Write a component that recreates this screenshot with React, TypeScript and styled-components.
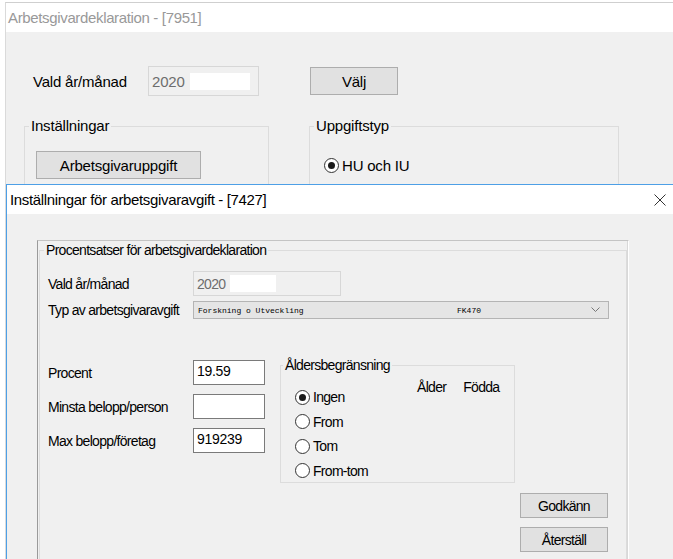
import React from "react";
import styled, { createGlobalStyle } from "styled-components";

const FONT = `"Liberation Sans", Arial, sans-serif`;

const GlobalStyle = createGlobalStyle`
  html, body {
    margin: 0;
    padding: 0;
    background: #fff;
    font-family: ${FONT};
  }
  * {
    box-sizing: border-box;
  }
`;

const Screen = styled.div`
  position: relative;
  width: 673px;
  height: 559px;
  overflow: hidden;
  background: #fff;
`;

const BackWindow = styled.div`
  margin: 2px 0 0 5px;
  height: 557px;
  border-top: 1px solid #cfcfcf;
  border-left: 1px solid #dadada;
  display: flex;
  flex-direction: column;
`;

const TitleBar = styled.div<{ inactive?: boolean }>`
  height: 29px;
  flex: none;
  background: #fff;
  display: flex;
  align-items: center;
  padding-left: 2px;
  font-size: 15px;
  letter-spacing: -0.35px;
  color: ${(p) => (p.inactive ? "#999" : "#000")};
`;

const BackBody = styled.div`
  flex: 1;
  background: #f0f0f0;
  padding: 34px 0 0 27px;
  font-size: 15px;
  letter-spacing: -0.2px;
  color: #000;
`;

const Row = styled.div`
  display: flex;
  align-items: center;
`;

const TopLabel = styled.div`
  width: 115px;
`;

const ReadOnlyBox = styled.div<{ w: number; h: number }>`
  width: ${(p) => p.w}px;
  height: ${(p) => p.h}px;
  border: 1px solid #d7d7d7;
  background: #f0f0f0;
  display: flex;
  align-items: center;
  padding-left: 3px;
  color: #6d6d6d;
`;

const WhiteBlock = styled.span<{ w: number }>`
  display: inline-block;
  width: ${(p) => p.w}px;
  height: 17px;
  margin-left: 5px;
  background: #fff;
`;

const Button = styled.button<{ w: number; h: number }>`
  width: ${(p) => p.w}px;
  height: ${(p) => p.h}px;
  background: #e1e1e1;
  border: 1px solid #adadad;
  font: inherit;
  letter-spacing: inherit;
  color: #000;
  padding: 0;
`;

const GroupRow = styled.div`
  display: flex;
  gap: 40px;
  margin-top: 22px;
  margin-left: -9px;
`;

const Group = styled.fieldset<{ w: number; h: number }>`
  width: ${(p) => p.w}px;
  height: ${(p) => p.h}px;
  margin: 0;
  padding: 0;
  border: 1px solid #dcdcdc;
  min-width: 0;
`;

const Legend = styled.legend<{ offset?: number }>`
  margin-left: ${(p) => p.offset ?? 4}px;
  padding: 0 2px;
  line-height: 16px;
  white-space: nowrap;
`;

const GroupInner = styled.div<{ pt: number; pl: number }>`
  padding: ${(p) => p.pt}px 0 0 ${(p) => p.pl}px;
`;

const RadioRow = styled.label`
  display: flex;
  align-items: center;
  gap: 3px;
  height: 24.5px;
  white-space: nowrap;
`;

const RadioDot = styled.span<{ checked?: boolean }>`
  flex: none;
  width: 15px;
  height: 15px;
  border-radius: 50%;
  border: 1px solid #333;
  background: #fff;
  display: flex;
  align-items: center;
  justify-content: center;
  &::after {
    content: "";
    width: 7px;
    height: 7px;
    border-radius: 50%;
    background: ${(p) => (p.checked ? "#1a1a1a" : "transparent")};
  }
`;

const Dialog = styled.div`
  position: absolute;
  left: 6px;
  top: 184px;
  right: -2px;
  bottom: -2px;
  border: 1px solid #4d9fe6;
  display: flex;
  flex-direction: column;
  background: #f0f0f0;
`;

const DialogTitle = styled(TitleBar)`
  justify-content: space-between;
  padding: 0 8px 0 3px;
`;

const CloseIcon = () => (
  <svg width="12" height="12" viewBox="0 0 12 12">
    <path d="M0.5 0.5 L11.5 11.5 M11.5 0.5 L0.5 11.5" stroke="#333" strokeWidth="1" fill="none" />
  </svg>
);

const DialogBody = styled.div`
  flex: 1;
  padding: 26px 0 0 30px;
  font-size: 14px;
  letter-spacing: -0.7px;
`;

const Panel = styled.div`
  width: 592px;
  height: 330px;
  border-top: 1px solid #c4c4c4;
  border-left: 1px solid #9a9a9a;
  border-right: 1px solid #fff;
  box-shadow: inset -1px 0 0 #d8d8d8;
  padding: 1px 3px 0 1px;
`;

const FormGrid = styled.div`
  display: grid;
  grid-template-columns: 145px auto;
  align-items: center;
  row-gap: 5px;
  padding: 13px 0 0 8px;
  white-space: nowrap;
`;

const Select = styled.div`
  width: 416px;
  height: 18px;
  background: #e5e5e5;
  border: 1px solid #b4b4b4;
  display: flex;
  align-items: center;
  padding: 0 8px 0 4px;
  font-family: "Liberation Mono", monospace;
  font-size: 8px;
  letter-spacing: 0;
  color: #000;
`;

const SelectName = styled.span`
  width: 259px;
`;

const Chevron = () => (
  <svg width="9" height="6" viewBox="0 0 9 6" style={{ marginLeft: "auto" }}>
    <polyline points="0.5,0.5 4.5,4.5 8.5,0.5" stroke="#777" strokeWidth="1" fill="none" />
  </svg>
);

const LowerArea = styled.div`
  display: flex;
  align-items: flex-start;
  margin-top: 41px;
  padding-left: 8px;
`;

const Fields = styled.div`
  display: grid;
  grid-template-columns: 145px 72px;
  grid-auto-rows: 25px;
  row-gap: 9px;
  align-items: center;
  white-space: nowrap;
`;

const TextBox = styled.div`
  height: 25px;
  background: #fff;
  border: 1px solid #7a7a7a;
  padding: 2px 0 0 3px;
  letter-spacing: -0.3px;
`;

const AgeGroup = styled(Group)`
  margin: -3px 0 0 15px;
`;

const AgeHeads = styled.div`
  display: flex;
  gap: 17px;
  margin: 6px 0 -10px 136px;
`;

const ButtonColumn = styled.div`
  display: flex;
  flex-direction: column;
  gap: 9px;
  margin: 10px 0 0 480px;
`;

export default function App() {
  return (
    <Screen>
      <GlobalStyle />
      <BackWindow>
        <TitleBar inactive>Arbetsgivardeklaration - [7951]</TitleBar>
        <BackBody>
          <Row>
            <TopLabel>Vald år/månad</TopLabel>
            <ReadOnlyBox w={111} h={30}>
              2020
              <WhiteBlock w={60} />
            </ReadOnlyBox>
            <Button w={88} h={28} style={{ marginLeft: 51 }}>
              Välj
            </Button>
          </Row>
          <GroupRow>
            <Group w={245} h={90}>
              <Legend>Inställningar</Legend>
              <GroupInner pt={17} pl={11}>
                <Button w={165} h={28}>
                  Arbetsgivaruppgift
                </Button>
              </GroupInner>
            </Group>
            <Group w={310} h={90}>
              <Legend>Uppgiftstyp</Legend>
              <GroupInner pt={19} pl={14}>
                <RadioRow>
                  <RadioDot checked />
                  HU och IU
                </RadioRow>
              </GroupInner>
            </Group>
          </GroupRow>
        </BackBody>
      </BackWindow>

      <Dialog>
        <DialogTitle>
          Inställningar för arbetsgivaravgift - [7427]
          <CloseIcon />
        </DialogTitle>
        <DialogBody>
          <Panel>
            <Group w={588} h={320}>
              <Legend>Procentsatser för arbetsgivardeklaration</Legend>
              <FormGrid>
                <span>Vald år/månad</span>
                <ReadOnlyBox w={148} h={25}>
                  2020
                  <WhiteBlock w={46} />
                </ReadOnlyBox>
                <span>Typ av arbetsgivaravgift</span>
                <Select>
                  <SelectName>Forskning o Utveckling</SelectName>
                  <span>FK470</span>
                  <Chevron />
                </Select>
              </FormGrid>
              <LowerArea>
                <Fields>
                  <span>Procent</span>
                  <TextBox>19.59</TextBox>
                  <span>Minsta belopp/person</span>
                  <TextBox />
                  <span>Max belopp/företag</span>
                  <TextBox>919239</TextBox>
                </Fields>
                <AgeGroup w={235} h={126}>
                  <Legend offset={2}>Åldersbegränsning</Legend>
                  <AgeHeads>
                    <span>Ålder</span>
                    <span>Födda</span>
                  </AgeHeads>
                  <GroupInner pt={0} pl={14}>
                    <RadioRow>
                      <RadioDot checked />
                      Ingen
                    </RadioRow>
                    <RadioRow>
                      <RadioDot />
                      From
                    </RadioRow>
                    <RadioRow>
                      <RadioDot />
                      Tom
                    </RadioRow>
                    <RadioRow>
                      <RadioDot />
                      From-tom
                    </RadioRow>
                  </GroupInner>
                </AgeGroup>
              </LowerArea>
              <ButtonColumn>
                <Button w={88} h={25}>
                  Godkänn
                </Button>
                <Button w={88} h={25}>
                  Återställ
                </Button>
              </ButtonColumn>
            </Group>
          </Panel>
        </DialogBody>
      </Dialog>
    </Screen>
  );
}
